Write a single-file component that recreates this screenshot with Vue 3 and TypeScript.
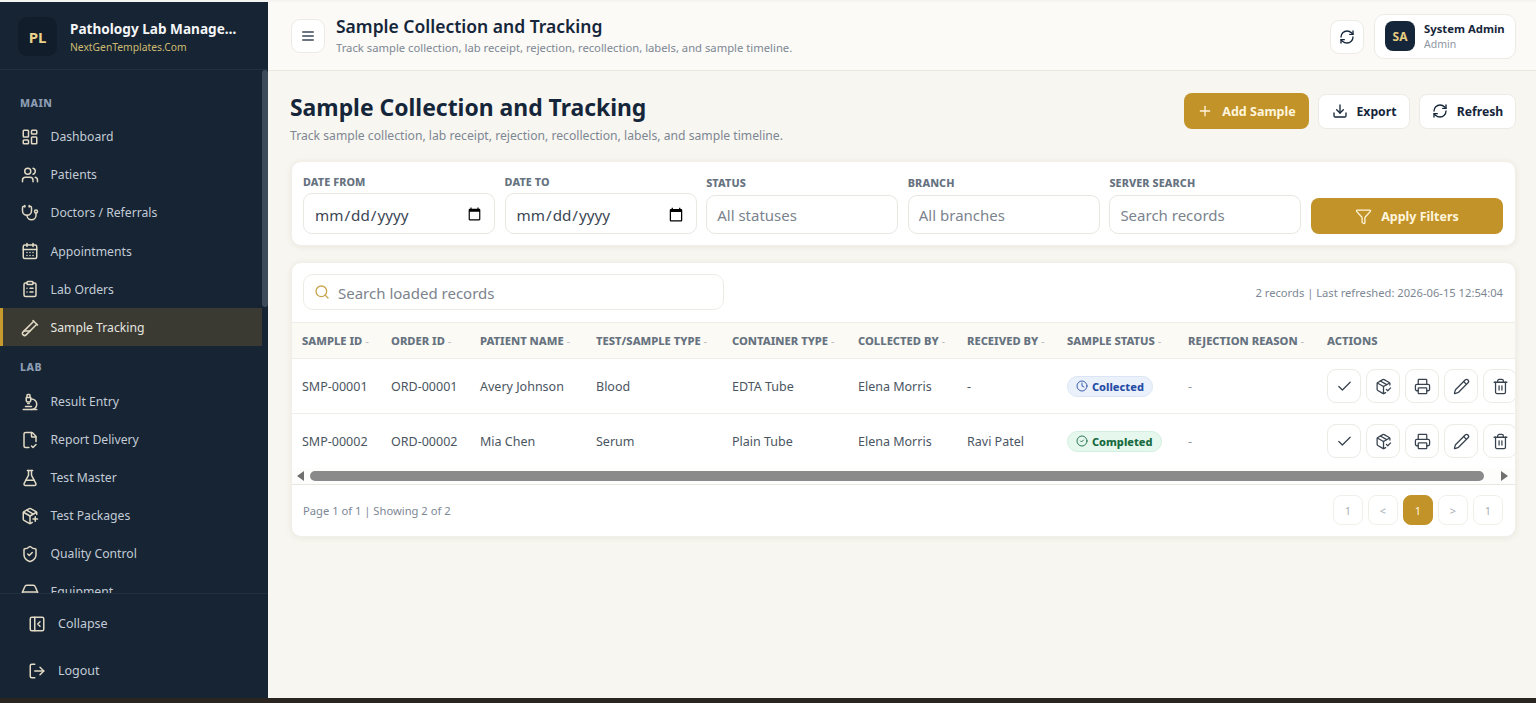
<script setup lang="ts">
import { h } from 'vue'

const icons: Record<string, string> = {
  dashboard: '<rect width="7" height="9" x="3" y="3" rx="1"/><rect width="7" height="5" x="14" y="3" rx="1"/><rect width="7" height="9" x="14" y="12" rx="1"/><rect width="7" height="5" x="3" y="16" rx="1"/>',
  users: '<path d="M16 21v-2a4 4 0 0 0-4-4H6a4 4 0 0 0-4 4v2"/><circle cx="9" cy="7" r="4"/><path d="M22 21v-2a4 4 0 0 0-3-3.87"/><path d="M16 3.13a4 4 0 0 1 0 7.75"/>',
  stethoscope: '<path d="M11 2v2"/><path d="M5 2v2"/><path d="M5 3H4a2 2 0 0 0-2 2v4a6 6 0 0 0 12 0V5a2 2 0 0 0-2-2h-1"/><path d="M8 15a6 6 0 0 0 12 0v-3"/><circle cx="20" cy="10" r="2"/>',
  calendar: '<path d="M8 2v4"/><path d="M16 2v4"/><rect width="18" height="18" x="3" y="4" rx="2"/><path d="M3 10h18"/><path d="M8 14h.01"/><path d="M12 14h.01"/><path d="M16 14h.01"/><path d="M8 18h.01"/><path d="M12 18h.01"/><path d="M16 18h.01"/>',
  clipboard: '<rect width="8" height="4" x="8" y="2" rx="1"/><path d="M16 4h2a2 2 0 0 1 2 2v14a2 2 0 0 1-2 2H6a2 2 0 0 1-2-2V6a2 2 0 0 1 2-2h2"/><path d="M12 11h4"/><path d="M12 16h4"/><path d="M8 11h.01"/><path d="M8 16h.01"/>',
  tube: '<path d="M21 7 6.82 21.18a2.83 2.83 0 0 1-3.99-.01a2.83 2.83 0 0 1 0-4L17 3"/><path d="m16 2 6 6"/><path d="M12 16H4"/>',
  microscope: '<path d="M6 18h8"/><path d="M3 22h18"/><path d="M14 22a7 7 0 1 0 0-14h-1"/><path d="M9 14h2"/><path d="M9 12a2 2 0 0 1-2-2V6h6v4a2 2 0 0 1-2 2Z"/><path d="M12 6V3a1 1 0 0 0-1-1H9a1 1 0 0 0-1 1v3"/>',
  filecheck: '<path d="M10.5 22H6a2 2 0 0 1-2-2V4a2 2 0 0 1 2-2h8a2.4 2.4 0 0 1 1.706.706l3.588 3.588A2.4 2.4 0 0 1 20 8v6"/><path d="M14 2v5a1 1 0 0 0 1 1h5"/><path d="m14 20 2 2 4-4"/>',
  flask: '<path d="M14 2v6a2 2 0 0 0 .245.96l5.51 10.08A2 2 0 0 1 18 22H6a2 2 0 0 1-1.755-2.96l5.51-10.08A2 2 0 0 0 10 8V2"/><path d="M6.453 15h11.094"/><path d="M8.5 2h7"/>',
  packageplus: '<path d="M16 16h6"/><path d="M19 13v6"/><path d="M21 10V8a2 2 0 0 0-1-1.73l-7-4a2 2 0 0 0-2 0l-7 4A2 2 0 0 0 3 8v8a2 2 0 0 0 1 1.73l7 4a2 2 0 0 0 2 0l2-1.14"/><path d="m7.5 4.27 9 5.15"/><path d="M3.29 7 12 12l8.71-5"/><path d="M12 22V12"/>',
  shield: '<path d="M20 13c0 5-3.5 7.5-7.66 8.95a1 1 0 0 1-.67-.01C7.5 20.5 4 18 4 13V6a1 1 0 0 1 1-1c2 0 4.5-1.2 6.24-2.72a1.17 1.17 0 0 1 1.52 0C14.51 3.81 17 5 19 5a1 1 0 0 1 1 1z"/><path d="m9 12 2 2 4-4"/>',
  equipment: '<path d="M2 20v-8l3-7a3 3 0 0 1 3-2h8a3 3 0 0 1 3 2l3 7v8"/><path d="M2 12h20"/><path d="M2 20h20"/>',
  collapse: '<rect width="18" height="18" x="3" y="3" rx="2"/><path d="M9 3v18"/><path d="m16 15-3-3 3-3"/>',
  logout: '<path d="m16 17 5-5-5-5"/><path d="M21 12H9"/><path d="M9 21H5a2 2 0 0 1-2-2V5a2 2 0 0 1 2-2h4"/>',
  menu: '<path d="M4 12h16"/><path d="M4 18h16"/><path d="M4 6h16"/>',
  refresh: '<path d="M3 12a9 9 0 0 1 9-9 9.75 9.75 0 0 1 6.74 2.74L21 8"/><path d="M21 3v5h-5"/><path d="M21 12a9 9 0 0 1-9 9 9.75 9.75 0 0 1-6.74-2.74L3 16"/><path d="M8 16H3v5"/>',
  plus: '<path d="M5 12h14"/><path d="M12 5v14"/>',
  download: '<path d="M12 15V3"/><path d="M21 15v4a2 2 0 0 1-2 2H5a2 2 0 0 1-2-2v-4"/><path d="m7 10 5 5 5-5"/>',
  funnel: '<path d="M10 20a1 1 0 0 0 .553.895l2 1A1 1 0 0 0 14 21v-7a2 2 0 0 1 .517-1.341L21.74 4.67A1 1 0 0 0 21 3H3a1 1 0 0 0-.742 1.67l7.225 7.989A2 2 0 0 1 10 14z"/>',
  search: '<path d="m21 21-4.34-4.34"/><circle cx="11" cy="11" r="8"/>',
  clock: '<circle cx="12" cy="12" r="10"/><path d="M12 6v6l4 2"/>',
  circlecheck: '<circle cx="12" cy="12" r="10"/><path d="m9 12 2 2 4-4"/>',
  check: '<path d="M20 6 9 17l-5-5"/>',
  packagecheck: '<path d="m16 16 2 2 4-4"/><path d="M21 10V8a2 2 0 0 0-1-1.73l-7-4a2 2 0 0 0-2 0l-7 4A2 2 0 0 0 3 8v8a2 2 0 0 0 1 1.73l7 4a2 2 0 0 0 2 0l2-1.14"/><path d="m7.5 4.27 9 5.15"/><path d="M3.29 7 12 12l8.71-5"/><path d="M12 22V12"/>',
  printer: '<path d="M6 18H4a2 2 0 0 1-2-2v-5a2 2 0 0 1 2-2h16a2 2 0 0 1 2 2v5a2 2 0 0 1-2 2h-2"/><path d="M6 9V3a1 1 0 0 1 1-1h10a1 1 0 0 1 1 1v6"/><rect x="6" y="14" width="12" height="8" rx="1"/>',
  pencil: '<path d="M21.174 6.812a1 1 0 0 0-3.986-3.987L3.842 16.174a2 2 0 0 0-.5.83l-1.321 4.352a.5.5 0 0 0 .623.622l4.353-1.32a2 2 0 0 0 .83-.497z"/><path d="m15 5 4 4"/>',
  trash: '<path d="M3 6h18"/><path d="M19 6v14a2 2 0 0 1-2 2H7a2 2 0 0 1-2-2V6"/><path d="M8 6V4a2 2 0 0 1 2-2h4a2 2 0 0 1 2 2v2"/><path d="M10 11v6"/><path d="M14 11v6"/>',
}

const Icon = (props: { name: string; size?: number; sw?: number }) =>
  h('svg', {
    width: props.size ?? 18,
    height: props.size ?? 18,
    viewBox: '0 0 24 24',
    fill: 'none',
    stroke: 'currentColor',
    'stroke-width': props.sw ?? 2,
    'stroke-linecap': 'round',
    'stroke-linejoin': 'round',
    innerHTML: icons[props.name],
    style: 'flex:none;display:block',
  })
Icon.props = ['name', 'size', 'sw']

const groups = [
  {
    title: 'MAIN',
    items: [
      { icon: 'dashboard', label: 'Dashboard' },
      { icon: 'users', label: 'Patients' },
      { icon: 'stethoscope', label: 'Doctors / Referrals' },
      { icon: 'calendar', label: 'Appointments' },
      { icon: 'clipboard', label: 'Lab Orders' },
      { icon: 'tube', label: 'Sample Tracking', active: true },
    ],
  },
  {
    title: 'LAB',
    items: [
      { icon: 'microscope', label: 'Result Entry' },
      { icon: 'filecheck', label: 'Report Delivery' },
      { icon: 'flask', label: 'Test Master' },
      { icon: 'packageplus', label: 'Test Packages' },
      { icon: 'shield', label: 'Quality Control' },
      { icon: 'equipment', label: 'Equipment' },
    ],
  },
]

const filters = [
  { label: 'STATUS', placeholder: 'All statuses' },
  { label: 'BRANCH', placeholder: 'All branches' },
  { label: 'SERVER SEARCH', placeholder: 'Search records' },
]

const columns = [
  { label: 'SAMPLE ID', width: 89 },
  { label: 'ORDER ID', width: 89 },
  { label: 'PATIENT NAME', width: 116 },
  { label: 'TEST/SAMPLE TYPE', width: 136 },
  { label: 'CONTAINER TYPE', width: 126 },
  { label: 'COLLECTED BY', width: 109 },
  { label: 'RECEIVED BY', width: 100 },
  { label: 'SAMPLE STATUS', width: 121 },
  { label: 'REJECTION REASON', width: 139 },
]

const rows = [
  { id: 'SMP-00001', order: 'ORD-00001', patient: 'Avery Johnson', type: 'Blood', container: 'EDTA Tube', by: 'Elena Morris', received: '-', status: 'Collected', tone: 'blue', icon: 'clock' },
  { id: 'SMP-00002', order: 'ORD-00002', patient: 'Mia Chen', type: 'Serum', container: 'Plain Tube', by: 'Elena Morris', received: 'Ravi Patel', status: 'Completed', tone: 'green', icon: 'circlecheck' },
]

const actions = ['check', 'packagecheck', 'printer', 'pencil', 'trash']
const pages = [
  { t: '1' },
  { t: '<' },
  { t: '1', on: true },
  { t: '>' },
  { t: '1' },
]
</script>

<template>
  <div class="screen">
    <div class="strip-top"></div>
    <div class="shell">
      <aside class="sidebar">
        <div class="brand">
          <div class="logo">PL</div>
          <div class="brand-text">
            <div class="brand-name">Pathology Lab Management System</div>
            <div class="brand-sub">NextGenTemplates.Com</div>
          </div>
        </div>
        <div class="nav-wrap">
          <nav class="nav">
            <div v-for="g in groups" :key="g.title" class="group">
              <div class="group-title">{{ g.title }}</div>
              <a v-for="it in g.items" :key="it.label" class="nav-item" :class="{ active: it.active }">
                <Icon :name="it.icon" :size="18" :sw="2" />
                <span>{{ it.label }}</span>
              </a>
            </div>
          </nav>
          <div class="rail"><div class="rail-thumb"></div></div>
        </div>
        <div class="side-foot">
          <a class="foot-item"><Icon name="collapse" :size="18" :sw="2" /><span>Collapse</span></a>
          <a class="foot-item"><Icon name="logout" :size="18" :sw="2" /><span>Logout</span></a>
        </div>
      </aside>

      <main class="main">
        <header class="topbar">
          <button class="icon-btn"><Icon name="menu" :size="16" /></button>
          <div class="top-titles">
            <div class="top-title">Sample Collection and Tracking</div>
            <div class="top-sub">Track sample collection, lab receipt, rejection, recollection, labels, and sample timeline.</div>
          </div>
          <button class="icon-btn refresh-top"><Icon name="refresh" :size="16" /></button>
          <div class="user">
            <div class="avatar">SA</div>
            <div>
              <div class="user-name">System Admin</div>
              <div class="user-role">Admin</div>
            </div>
          </div>
        </header>

        <div class="content">
          <section class="page-head">
            <div>
              <h1>Sample Collection and Tracking</h1>
              <p>Track sample collection, lab receipt, rejection, recollection, labels, and sample timeline.</p>
            </div>
            <div class="head-actions">
              <button class="btn gold add"><Icon name="plus" :size="16" /><span>Add Sample</span></button>
              <button class="btn plain export"><Icon name="download" :size="16" /><span>Export</span></button>
              <button class="btn plain reload"><Icon name="refresh" :size="16" /><span>Refresh</span></button>
            </div>
          </section>

          <section class="card filters">
            <label class="field date">
              <span>DATE FROM</span>
              <input type="date" />
            </label>
            <label class="field date">
              <span>DATE TO</span>
              <input type="date" />
            </label>
            <label v-for="f in filters" :key="f.label" class="field">
              <span>{{ f.label }}</span>
              <input type="text" :placeholder="f.placeholder" />
            </label>
            <button class="btn gold apply"><Icon name="funnel" :size="17" :sw="1.8" /><span>Apply Filters</span></button>
          </section>

          <section class="card table-card">
            <div class="table-tools">
              <div class="search">
                <span class="search-icon"><Icon name="search" :size="16" /></span>
                <input type="text" placeholder="Search loaded records" />
              </div>
              <div class="meta">2 records | Last refreshed: 2026-06-15 12:54:04</div>
            </div>
            <div class="table-clip">
              <table>
                <colgroup>
                  <col v-for="c in columns" :key="c.label" :style="{ width: c.width + 'px' }" />
                  <col class="col-actions" />
                </colgroup>
                <thead>
                  <tr>
                    <th v-for="c in columns" :key="c.label">{{ c.label }} <i>-</i></th>
                    <th>ACTIONS</th>
                  </tr>
                </thead>
                <tbody>
                  <tr v-for="r in rows" :key="r.id">
                    <td>{{ r.id }}</td>
                    <td>{{ r.order }}</td>
                    <td>{{ r.patient }}</td>
                    <td>{{ r.type }}</td>
                    <td>{{ r.container }}</td>
                    <td>{{ r.by }}</td>
                    <td>{{ r.received }}</td>
                    <td>
                      <span class="badge" :class="r.tone"><Icon :name="r.icon" :size="12" :sw="1.8" />{{ r.status }}</span>
                    </td>
                    <td class="dash">-</td>
                    <td>
                      <div class="row-actions">
                        <button v-for="a in actions" :key="a" class="act"><Icon :name="a" :size="17" :sw="1.8" /></button>
                      </div>
                    </td>
                  </tr>
                </tbody>
              </table>
            </div>
            <div class="hscroll">
              <span class="arrow left"></span>
              <div class="hthumb"></div>
              <span class="arrow right"></span>
            </div>
            <div class="table-foot">
              <div class="page-info">Page 1 of 1 | Showing 2 of 2</div>
              <div class="pager">
                <button v-for="(p, i) in pages" :key="i" class="page" :class="{ on: p.on }">{{ p.t }}</button>
              </div>
            </div>
          </section>
        </div>
      </main>
    </div>
    <div class="strip-bottom"></div>
  </div>
</template>

<style>
html, body { margin: 0; padding: 0; overflow: hidden; }
</style>

<style scoped>
.screen {
  width: 1536px;
  height: 703px;
  display: flex;
  flex-direction: column;
  overflow: hidden;
  font-family: "Noto Sans", "Open Sans", sans-serif;
  color: #16263a;
  background: #f8f6f0;
}
.strip-top { height: 2px; background: #f4f4f2; flex: none; }
.strip-bottom { height: 5px; background: #2b2522; flex: none; }
.shell { flex: 1; display: flex; min-height: 0; }

.sidebar {
  width: 268px;
  flex: none;
  background: #162433;
  display: flex;
  flex-direction: column;
  color: #c3cbd6;
}
.brand {
  height: 68px;
  flex: none;
  box-sizing: border-box;
  display: flex;
  align-items: center;
  gap: 13px;
  padding: 2px 31px 0 18px;
  border-bottom: 1px solid #1f3042;
}
.logo {
  width: 39px;
  height: 39px;
  border-radius: 9px;
  background: #111d2a;
  color: #ecd28a;
  font-weight: 700;
  font-size: 15px;
  display: flex;
  align-items: center;
  justify-content: center;
  flex: none;
}
.brand-text { min-width: 0; flex: 1; }
.brand-name {
  font-size: 13.6px;
  font-weight: 700;
  color: #f4f5f7;
  white-space: nowrap;
  overflow: hidden;
  text-overflow: ellipsis;
  line-height: 20px;
}
.brand-sub { font-size: 10.3px; color: #cdbb72; line-height: 15px; margin-top: 1px; }
.nav-wrap { flex: 1; min-height: 0; display: flex; }
.nav { flex: 1; min-width: 0; overflow: hidden; padding-top: 26px; box-sizing: border-box; }
.group { margin-bottom: 14px; }
.group-title {
  font-size: 10.5px;
  font-weight: 800;
  letter-spacing: 0.5px;
  color: #8d9db3;
  padding-left: 20px;
  line-height: 14px;
  margin-bottom: 8px;
}
.group:first-child .group-title { margin-bottom: 7px; }
.nav-item {
  height: 38px;
  box-sizing: border-box;
  display: flex;
  align-items: center;
  gap: 11.5px;
  padding-left: 21px;
  padding-top: 1px;
  font-size: 12.2px;
  color: #c3cbd6;
}
.group:first-child .nav-item { height: 38.2px; }
.nav-item :deep(svg) { color: #e2dac5; }
.nav-item.active {
  background: #3a3a32;
  border-left: 3px solid #c69a2c;
  padding-left: 18px;
  color: #e7e6e0;
}
.rail { width: 6px; flex: none; }
.rail-thumb { height: 237px; background: #3c4a59; border-radius: 3px; }
.side-foot {
  height: 105px;
  flex: none;
  box-sizing: border-box;
  border-top: 1px solid #1f3042;
  padding-top: 6px;
  background: #162433;
}
.foot-item {
  height: 47px;
  display: flex;
  align-items: center;
  gap: 12px;
  padding-left: 28px;
  font-size: 12.5px;
  color: #c3cbd6;
}
.foot-item :deep(svg) { color: #e2dac5; }

.main { flex: 1; min-width: 0; display: flex; flex-direction: column; }
.topbar {
  height: 69px;
  flex: none;
  box-sizing: border-box;
  background: #fbfaf6;
  border-bottom: 1px solid #e9e7e0;
  display: flex;
  align-items: center;
  padding: 0 20px 0 23px;
}
.icon-btn {
  width: 34px;
  height: 34px;
  border: 1px solid #ecebe5;
  border-radius: 9px;
  background: #fff;
  color: #3d4957;
  display: flex;
  align-items: center;
  justify-content: center;
  padding: 0;
  flex: none;
}
.top-titles { margin-left: 11px; flex: 1; margin-top: -2px; }
.top-title { font-size: 17.5px; font-weight: 600; line-height: 24px; color: #16263a; }
.top-sub { font-size: 11.25px; color: #7d8794; line-height: 16px; margin-top: 2px; }
.refresh-top { margin-right: 10px; margin-top: 1px; color: #16263a; }
.user {
  width: 142px;
  height: 45px;
  box-sizing: border-box;
  border: 1px solid #ecebe5;
  border-radius: 10px;
  background: #fff;
  display: flex;
  align-items: center;
  gap: 9px;
  padding-left: 10px;
}
.avatar {
  width: 30px;
  height: 30px;
  border-radius: 8px;
  background: #16263a;
  color: #e6cc80;
  font-size: 12px;
  font-weight: 700;
  display: flex;
  align-items: center;
  justify-content: center;
}
.user-name { font-size: 11.3px; font-weight: 700; color: #16263a; line-height: 15px; }
.user-role { font-size: 10.5px; color: #8d95a0; line-height: 15px; padding-top: 1px; }

.content { flex: 1; padding: 0 20px 0 23px; min-height: 0; }
.page-head {
  height: 90px;
  box-sizing: border-box;
  display: flex;
  justify-content: space-between;
  padding-top: 22px;
}
.page-head > div:first-child { margin-left: -1px; }
h1 { margin: 0; font-size: 22.9px; font-weight: 700; line-height: 30px; color: #16263a; }
.page-head p { margin: 4px 0 0; font-size: 12.17px; line-height: 18px; color: #7d8794; }
.head-actions { display: flex; gap: 9px; align-items: center; height: 36px; }
.btn {
  font-family: inherit;
  font-weight: 700;
  font-size: 12.5px;
  border-radius: 8px;
  display: flex;
  align-items: center;
  justify-content: center;
  gap: 9px;
  height: 35px;
  box-sizing: border-box;
  padding: 0;
}
.gold { background: #c29329; color: #fff5dc; border: 0; }
.add { width: 125px; height: 36px; }
.plain { background: #fff; border: 1px solid #ecebe5; color: #16263a; font-size: 12.2px; }
.export { width: 92px; }
.reload { width: 97px; }
.card {
  background: #fff;
  border-radius: 10px;
  box-shadow: 0 1px 6px rgba(60, 50, 20, 0.08);
  border: 1px solid #f1efe9;
  box-sizing: border-box;
}
.filters {
  height: 85px;
  display: grid;
  grid-template-columns: repeat(6, 192px);
  column-gap: 9.6px;
  align-items: end;
  padding: 0 11px 11px;
}
.field { display: flex; flex-direction: column; }
.field span {
  font-size: 10.8px;
  font-weight: 800;
  letter-spacing: 0.1px;
  color: #66727f;
  line-height: 14px;
  margin-bottom: 5px;
}
.field input {
  height: 39px;
  box-sizing: border-box;
  width: 100%;
  border: 1px solid #e9e7e2;
  border-radius: 9px;
  background: #fff;
  padding: 0 10px;
  font-family: inherit;
  font-size: 15px;
  color: #3a4653;
  outline: none;
}
.field.date input { height: 41px; padding: 2px 10px 0; font-size: 15.2px; }
.field.date span { margin-bottom: 4px; }
.field input::placeholder { color: #7b838d; opacity: 1; }
.apply { width: 192px; height: 36px; font-size: 12.5px; }

.table-card {
  margin-top: 16px;
  height: 275px;
  overflow: hidden;
  display: flex;
  flex-direction: column;
}
.table-tools {
  height: 60px;
  flex: none;
  box-sizing: border-box;
  display: flex;
  align-items: center;
  justify-content: space-between;
  padding: 0 12px 0 11px;
  margin-top: -1px;
}
.search {
  width: 421px;
  height: 36px;
  box-sizing: border-box;
  border: 1px solid #ecebe5;
  border-radius: 10px;
  display: flex;
  align-items: center;
  gap: 8px;
  padding-left: 10px;
}
.search-icon { color: #c9a64e; }
.search input {
  border: 0;
  outline: none;
  flex: 1;
  min-width: 0;
  padding: 1px 0 0;
  font-family: inherit;
  font-size: 15px;
  background: transparent;
}
.search input::placeholder { color: #7b838d; opacity: 1; }
.meta { font-size: 11.2px; color: #7d8794; }
.table-clip { overflow: hidden; flex: none; margin-left: -1px; }
table {
  border-collapse: collapse;
  table-layout: fixed;
  width: 1239px;
}
.col-actions { width: 214px; }
th {
  height: 36px;
  box-sizing: border-box;
  background: #fbfaf5;
  border-top: 1px solid #efede7;
  border-bottom: 1px solid #efede7;
  text-align: left;
  padding: 0 0 0 11px;
  font-size: 11.2px;
  font-weight: 800;
  color: #66727f;
  white-space: nowrap;
}
th i { font-style: normal; font-weight: 400; color: #b5bac0; }
td {
  height: 54.5px;
  box-sizing: border-box;
  padding: 1px 0 0 11px;
  border-bottom: 1px solid #efede7;
  font-size: 12.5px;
  color: #4a5562;
  white-space: nowrap;
}
tbody tr:last-child td { border-bottom: 0; }
.dash { color: #8d95a0; }
.badge {
  display: inline-flex;
  align-items: center;
  gap: 4px;
  height: 21px;
  box-sizing: border-box;
  padding: 0 8px;
  border-radius: 11px;
  font-size: 11px;
  font-weight: 800;
}
.badge.blue { background: #ebf1fb; border: 1px solid #dbe5f5; color: #274ea6; }
.badge.green { background: #e6f8ee; border: 1px solid #d2f0df; color: #17693f; }
.row-actions { display: flex; gap: 5px; }
.act {
  width: 34px;
  height: 34px;
  padding: 0;
  border: 1px solid #ecebe5;
  border-radius: 9px;
  background: #fff;
  color: #39434f;
  display: flex;
  align-items: center;
  justify-content: center;
  flex: none;
}
.hscroll {
  height: 17px;
  flex: none;
  display: flex;
  align-items: center;
  background: #fdfdfc;
  border-bottom: 1px solid #e9e7e2;
  box-sizing: border-box;
  padding: 0 7px 0 5px;
}
.hthumb { width: 1176px; height: 10px; border-radius: 5px; background: #8a8a8a; margin: 0 17px 0 6px; }
.arrow { width: 0; height: 0; border-top: 5px solid transparent; border-bottom: 5px solid transparent; }
.arrow.left { border-right: 7px solid #707070; }
.arrow.right { border-left: 7px solid #707070; }
.table-foot {
  flex: 1;
  display: flex;
  align-items: center;
  justify-content: space-between;
  padding: 0 12px 0 11px;
}
.page-info { font-size: 11.2px; color: #7d8794; }
.pager { display: flex; gap: 5px; }
.page {
  width: 30px;
  height: 30px;
  padding: 0;
  border: 1px solid #f1efe9;
  border-radius: 8px;
  background: #fff;
  font-family: inherit;
  font-size: 11px;
  color: #a9afb6;
}
.page.on { background: #c29329; border-color: #c29329; color: #fff5dc; }
</style>
